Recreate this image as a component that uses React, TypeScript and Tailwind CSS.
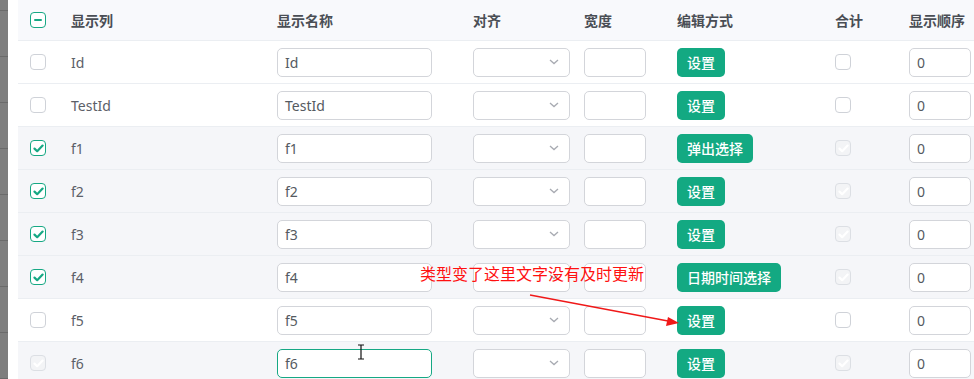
import React from "react";

type Row = {
  name: string;
  checked: boolean;
  edit: string;
  bg: string;
  focus?: boolean;
  sumDisabled: boolean;
  rowDisabled?: boolean;
};

const rows: Row[] = [
  { name: "Id", checked: false, edit: "设置", bg: "bg-white", sumDisabled: false },
  { name: "TestId", checked: false, edit: "设置", bg: "bg-white", sumDisabled: false },
  { name: "f1", checked: true, edit: "弹出选择", bg: "bg-[#f5f6f9]", sumDisabled: true },
  { name: "f2", checked: true, edit: "设置", bg: "bg-[#f5f6f9]", sumDisabled: true },
  { name: "f3", checked: true, edit: "设置", bg: "bg-[#f5f6f9]", sumDisabled: true },
  { name: "f4", checked: true, edit: "日期时间选择", bg: "bg-[#f5f6f9]", sumDisabled: true },
  { name: "f5", checked: false, edit: "设置", bg: "bg-white", sumDisabled: false },
  { name: "f6", checked: false, edit: "设置", bg: "bg-[#f5f6f9]", sumDisabled: true, focus: true, rowDisabled: true },
];

function Check({ state }: { state: "off" | "on" | "half" | "disabled" }) {
  if (state === "on")
    return (
      <span className="flex h-4 w-4 items-center justify-center rounded-[4px] border border-[#16a884] bg-white">
        <svg width="11" height="9" viewBox="0 0 11 9">
          <path d="M1.5 4.6 L4.2 7.2 L9.6 1.6" fill="none" stroke="#16a884" strokeWidth="2.2" strokeLinecap="round" strokeLinejoin="round" />
        </svg>
      </span>
    );
  if (state === "half")
    return (
      <span className="flex h-4 w-4 items-center justify-center rounded-[4px] border border-[#16a884] bg-white">
        <span className="h-[2px] w-2 rounded bg-[#16a884]" />
      </span>
    );
  if (state === "disabled")
    return (
      <span className="flex h-4 w-4 items-center justify-center rounded-[4px] border border-[#dcdfe4] bg-[#f3f4f6]">
        <svg width="11" height="9" viewBox="0 0 11 9">
          <path d="M1.5 4.6 L4.2 7.2 L9.6 1.6" fill="none" stroke="#ffffff" strokeWidth="2.2" strokeLinecap="round" strokeLinejoin="round" />
        </svg>
      </span>
    );
  return <span className="block h-4 w-4 rounded-[4px] border border-[#cfd2d8] bg-white" />;
}

const input = "h-[29px] rounded-[5px] border bg-white px-[7px] text-[14px] text-[#555a61] flex items-center";

export default function App() {
  return (
    <div
      className="relative flex h-[379px] w-[974px] overflow-hidden bg-white"
      style={{ fontFamily: '"Noto Sans", "Noto Sans CJK SC", sans-serif' }}
    >
      {/* background window edge */}
      <div className="flex w-2 flex-col bg-[#7e7e7e]">
        <div className="h-5 border-b border-[#6a6a6a]" />
        {[0, 1, 2, 3, 4, 5, 6, 7].map((i) => (
          <div key={i} className="h-[46px] shrink-0 border-b border-[#6a6a6a]" />
        ))}
      </div>
      <div className="w-[10px] bg-white" />

      <div className="flex-1 text-[14px] text-[#5c6068]">
        {/* header */}
        <div className="flex h-[41px] items-center border-b border-[#ebeef2] bg-[#f8f9fc] font-semibold text-[#4a4e55]">
          <div className="w-[53px] pl-3">
            <Check state="half" />
          </div>
          <div className="w-[206px]">显示列</div>
          <div className="w-[196px]">显示名称</div>
          <div className="w-[111px]">对齐</div>
          <div className="w-[93px]">宽度</div>
          <div className="w-[158px]">编辑方式</div>
          <div className="w-[74px]">合计</div>
          <div className="flex-1">显示顺序</div>
        </div>

        {rows.map((r) => (
          <div key={r.name} className={`flex h-[43px] items-center border-b border-[#ebeef2] ${r.bg}`}>
            <div className="w-[53px] pl-3">
              <Check state={r.rowDisabled ? "disabled" : r.checked ? "on" : "off"} />
            </div>
            <div className="w-[206px]">{r.name}</div>
            <div className="w-[196px]">
              <div className={`${input} w-[155px] ${r.focus ? "border-[#16a884]" : "border-[#d3d5da]"}`}>{r.name}</div>
            </div>
            <div className="w-[111px]">
              <div className={`${input} w-[97px] justify-end border-[#d3d5da] pr-[10px]`}>
                <svg width="10" height="6" viewBox="0 0 10 6">
                  <path d="M1 1 L5 4.6 L9 1" fill="none" stroke="#a8abb2" strokeWidth="1.3" />
                </svg>
              </div>
            </div>
            <div className="w-[93px]">
              <div className={`${input} w-[62px] border-[#d3d5da]`} />
            </div>
            <div className="w-[158px]">
              <span className="inline-flex h-[29px] items-center rounded-[5px] bg-[#13a982] px-[10px] text-[14px] font-medium text-white">
                {r.edit}
              </span>
            </div>
            <div className="w-[74px]">
              <Check state={r.sumDisabled ? "disabled" : "off"} />
            </div>
            <div className="flex-1">
              <div className={`${input} w-[62px] border-[#d3d5da]`}>0</div>
            </div>
          </div>
        ))}
      </div>

      {/* annotation */}
      <div
        className="absolute left-[420px] top-[263px] text-[16px] leading-[20px] text-[#ff1010]"
        style={{ fontFamily: '"Noto Sans CJK SC", sans-serif' }}
      >
        类型变了这里文字没有及时更新
      </div>
      <svg className="absolute left-0 top-0" width="974" height="379">
        <line x1="530" y1="295" x2="668" y2="321" stroke="#f01818" strokeWidth="1.3" />
        <path d="M679 323 L666 326 L668 317 Z" fill="#f01818" />
      </svg>

      {/* text cursor */}
      <svg className="absolute left-[356px] top-[344px]" width="10" height="16" viewBox="0 0 10 16">
        <path d="M2 1 H8 M5 1 V15 M2 15 H8" stroke="#111" strokeWidth="1.2" fill="none" />
      </svg>
    </div>
  );
}
